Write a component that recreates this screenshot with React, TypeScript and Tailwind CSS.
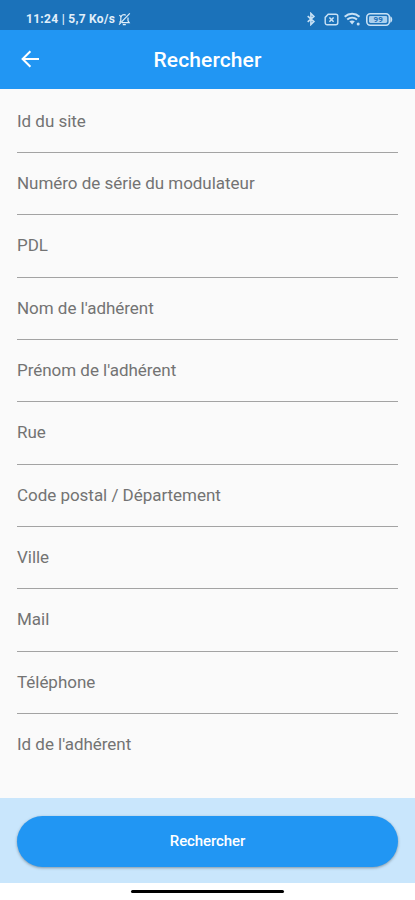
const fields = [
  { id: "site", label: "Id du site" },
  { id: "serial", label: "Numéro de série du modulateur" },
  { id: "pdl", label: "PDL" },
  { id: "lastName", label: "Nom de l'adhérent" },
  { id: "firstName", label: "Prénom de l'adhérent" },
  { id: "street", label: "Rue" },
  { id: "postcode", label: "Code postal / Département" },
  { id: "city", label: "Ville" },
  { id: "mail", label: "Mail" },
  { id: "phone", label: "Téléphone" },
  { id: "member", label: "Id de l'adhérent" },
];

function MutedBellIcon() {
  return (
    <svg viewBox="0 0 14 14" className="h-3.5 w-3.5" fill="none" stroke="currentColor" strokeWidth="1.2">
      <path d="M2.6 10.6l1.2-1.8V6a3.2 3.2 0 0 1 5-2.8M11 5.6v3.2l1.2 1.8H5M5.8 12.6h3" />
      <path d="M12.8 1.4L2 12.6M2.4 3.2l2 2" />
    </svg>
  );
}

function BluetoothIcon() {
  return (
    <svg viewBox="0 0 10 14" className="h-3.5 w-2.5" fill="none" stroke="currentColor" strokeWidth="1.6">
      <path d="M1.7 4.2l6.2 5.4-3 2.9V1.5l3 2.9-6.2 5.4" />
    </svg>
  );
}

function NoSimIcon() {
  return (
    <svg viewBox="0 0 15 13" className="h-[13px] w-[15px]" fill="none" stroke="currentColor">
      <path d="M4.2 1.2h7.6a2 2 0 0 1 2 2v6.6a2 2 0 0 1-2 2H3.2a2 2 0 0 1-2-2V4.4z" strokeWidth="1.4" />
      <path d="M5.4 4.4l4.2 4.4M9.6 4.4L5.4 8.8" strokeWidth="1.5" />
    </svg>
  );
}

function WifiIcon() {
  return (
    <svg viewBox="0 0 17 14" className="h-3.5 w-[17px]" fill="none" stroke="currentColor" strokeWidth="2">
      <path d="M.7 4.7c4.3-3.9 10.5-3.9 14.8 0" />
      <path d="M3.2 7.5c2.9-2.5 6.9-2.5 9.8 0" />
      <path d="M5.4 9.3l2.7 3.3 2.7-3.3c-1.6-1.2-3.8-1.2-5.4 0z" fill="currentColor" stroke="none" />
      <circle cx="14.2" cy="11.9" r="1.5" fill="currentColor" stroke="none" />
    </svg>
  );
}

function BatteryIcon() {
  return (
    <svg viewBox="0 0 27 13" className="h-[13px] w-[27px]" fill="none">
      <rect x=".8" y=".8" width="22.6" height="11.4" rx="3.4" stroke="currentColor" strokeWidth="1.6" />
      <rect x="3" y="3" width="18.2" height="7" rx="1.4" fill="#a9cfee" />
      <path d="M24.3 3.2c2.6.8 2.6 5.8 0 6.6z" fill="currentColor" />
      <text x="12.2" y="9.3" textAnchor="middle" fontSize="8" fontWeight="700" fill="#1d6fb8">
        99
      </text>
    </svg>
  );
}

function StatusBar() {
  return (
    <div className="flex h-[30px] items-center justify-between bg-[#1b72ba] pt-2 pr-[22px] pl-[26px] text-[#e1effa]">
      <div className="flex items-center text-xs font-bold tracking-[0.29px] whitespace-nowrap">
        <span className="w-[91px]">11:24 | 5,7 Ko/s</span>
        <MutedBellIcon />
      </div>
      <div className="flex items-center text-[#c8e1f5]">
        <BluetoothIcon />
        <span className="ml-[8px]">
          <NoSimIcon />
        </span>
        <span className="ml-[5px]">
          <WifiIcon />
        </span>
        <span className="ml-[5px]">
          <BatteryIcon />
        </span>
      </div>
    </div>
  );
}

function AppBar() {
  return (
    <header className="grid h-[58.5px] grid-cols-[60px_1fr_60px] items-center bg-[#2196f3] text-white">
      <button type="button" aria-label="Retour" className="pl-[21px]">
        <svg viewBox="0 0 18 18" className="h-[18px] w-[18px]" fill="none" stroke="currentColor" strokeWidth="2">
          <path d="M18 9H2M9.4 1.2L1.6 9l7.8 7.8" />
        </svg>
      </button>
      <h1 className="pt-[3px] text-center text-[21px] font-medium tracking-[0.1px]">Rechercher</h1>
    </header>
  );
}

export default function App() {
  return (
    <div className="flex h-[900px] w-full flex-col overflow-hidden bg-white font-[Roboto,sans-serif]">
      <StatusBar />
      <AppBar />
      <main className="flex-1 bg-[#fafafa] px-[17px] pt-[2.2px]">
        {fields.map((field) => (
          <div
            key={field.id}
            className="flex h-[62.35px] items-center border-b border-[#a3a3a3] text-[17px] tracking-[-0.03px] text-[#737373] last:border-transparent"
          >
            {field.label}
          </div>
        ))}
      </main>
      <footer className="h-[85px] bg-[#c9e6fc] px-[17px] pt-[18px]">
        <button
          type="button"
          className="h-[51px] w-full rounded-full bg-[#2196f3] text-[15px] font-medium tracking-[-0.1px] text-white shadow-[0_1px_3px_rgba(0,0,0,0.35)]"
        >
          Rechercher
        </button>
      </footer>
      <div className="flex h-[17px] justify-center pt-[7px]">
        <div className="h-[3px] w-[153px] rounded-full bg-black" />
      </div>
    </div>
  );
}
